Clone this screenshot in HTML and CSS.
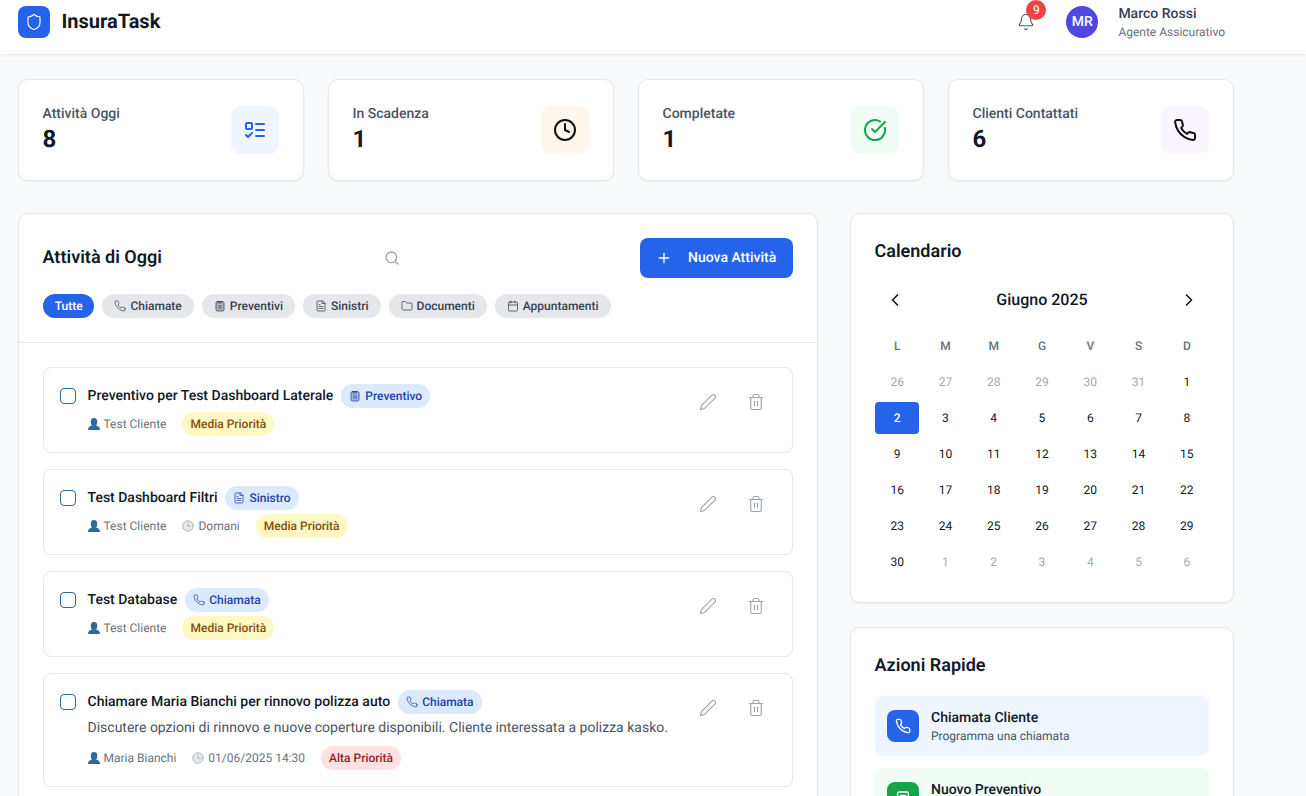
FILE: index.html
```html
<!DOCTYPE html>
<html lang="it">
<head>
<meta charset="utf-8">
<title>InsuraTask</title>
<link rel="stylesheet" href="styles.css">
</head>
<body>
<svg class="sprite" xmlns="http://www.w3.org/2000/svg">
  <symbol id="i-shield" viewBox="0 0 24 24"><path d="M20 13c0 5-3.500 7.500-7.660 8.950a1 1 0 0 1-.67-.01C7.500 20.500 4 18 4 13V6a1 1 0 0 1 1-1c2 0 4.500-1.200 6.240-2.720a1.170 1.170 0 0 1 1.520 0C14.510 3.810 17 5 19 5a1 1 0 0 1 1 1z"/></symbol>
  <symbol id="i-bell" viewBox="0 0 24 24"><path d="M10.268 21a2 2 0 0 0 3.464 0"/><path d="M3.262 15.326A1 1 0 0 0 4 17h16a1 1 0 0 0 .74-1.673C19.410 13.956 18 12.499 18 8A6 6 0 0 0 6 8c0 4.499-1.411 5.956-2.738 7.326"/></symbol>
  <symbol id="i-list" viewBox="0 0 24 24"><rect x="3" y="5" width="6" height="6" rx="1"/><path d="m3 17 2 2 4-4"/><path d="M13 6h8"/><path d="M13 12h8"/><path d="M13 18h8"/></symbol>
  <symbol id="i-clock" viewBox="0 0 24 24"><circle cx="12" cy="12" r="10"/><path d="M12 6v6l4 2"/></symbol>
  <symbol id="i-check" viewBox="0 0 24 24"><path d="M21.801 10A10 10 0 1 1 17 3.335"/><path d="m9 11 3 3L22 4"/></symbol>
  <symbol id="i-phone" viewBox="0 0 24 24"><path d="M22 16.920v3a2 2 0 0 1-2.180 2 19.790 19.790 0 0 1-8.630-3.070 19.500 19.500 0 0 1-6-6 19.790 19.790 0 0 1-3.070-8.670A2 2 0 0 1 4.110 2h3a2 2 0 0 1 2 1.720 12.840 12.840 0 0 0 .7 2.810 2 2 0 0 1-.45 2.110L8.090 9.910a16 16 0 0 0 6 6l1.270-1.270a2 2 0 0 1 2.110-.45 12.840 12.840 0 0 0 2.810.7A2 2 0 0 1 22 16.920z"/></symbol>
  <symbol id="i-search" viewBox="0 0 24 24"><circle cx="11" cy="11" r="8"/><path d="m21 21-4.300-4.300"/></symbol>
  <symbol id="i-plus" viewBox="0 0 24 24"><path d="M5 12h14"/><path d="M12 5v14"/></symbol>
  <symbol id="i-clipboard" viewBox="0 0 24 24"><rect x="4" y="3" width="16" height="19" rx="3" fill="currentColor" fill-opacity=".3"/><path d="M9 3h6v3H9z"/><path d="M9 12h6M9 16h6"/></symbol>
  <symbol id="i-note" viewBox="0 0 24 24"><rect x="4" y="3" width="16" height="19" rx="2"/><path d="M8 8h8M8 13h8"/></symbol>
  <symbol id="i-file" viewBox="0 0 24 24"><path d="M15 2H6a2 2 0 0 0-2 2v16a2 2 0 0 0 2 2h12a2 2 0 0 0 2-2V7z"/><path d="M14 2v5h6"/><path d="M8 13h8"/><path d="M8 17h8"/><path d="M8 9h2"/></symbol>
  <symbol id="i-folder" viewBox="0 0 24 24"><path d="M20 20a2 2 0 0 0 2-2V8a2 2 0 0 0-2-2h-7.900a2 2 0 0 1-1.690-.9L9.600 3.900A2 2 0 0 0 7.930 3H4a2 2 0 0 0-2 2v13a2 2 0 0 0 2 2z"/></symbol>
  <symbol id="i-calendar" viewBox="0 0 24 24"><path d="M8 2v4"/><path d="M16 2v4"/><rect x="3" y="4" width="18" height="18" rx="2"/><path d="M3 10h18"/></symbol>
  <symbol id="i-pencil" viewBox="0 0 24 24"><path d="M21.174 6.812a1 1 0 0 0-3.986-3.987L3.842 16.174a2 2 0 0 0-.5.830l-1.321 4.352a.5.500 0 0 0 .623.622l4.353-1.320a2 2 0 0 0 .830-.497z"/></symbol>
  <symbol id="i-trash" viewBox="0 0 24 24"><path d="M3 6h18"/><path d="M19 6v14a2 2 0 0 1-2 2H7a2 2 0 0 1-2-2V6"/><path d="M8 6V4a2 2 0 0 1 2-2h4a2 2 0 0 1 2 2v2"/><path d="M10 11v6"/><path d="M14 11v6"/></symbol>
  <symbol id="i-left" viewBox="0 0 24 24"><path d="m15 18-6-6 6-6"/></symbol>
  <symbol id="i-right" viewBox="0 0 24 24"><path d="m9 18 6-6-6-6"/></symbol>
  <symbol id="i-person" viewBox="0 0 24 24"><ellipse cx="12" cy="8" rx="6.500" ry="8"/><path d="M0 24c0-6 4-8 8.500-9.500h7C20 16 24 18 24 24z"/></symbol>
  <symbol id="i-emoji-clock" viewBox="0 0 24 24"><circle cx="12" cy="12" r="10.500" fill="currentColor" fill-opacity=".25"/><path d="M12 6v6.500h5"/></symbol>
</svg>

<header class="topbar">
  <div class="brand">
    <span class="brand-mark"><svg class="ico ico-18"><use href="#i-shield"/></svg></span>
    <span class="brand-name">InsuraTask</span>
  </div>
  <div class="account">
    <button class="bell" type="button">
      <svg class="ico ico-18"><use href="#i-bell"/></svg>
      <span class="bell-count">9</span>
    </button>
    <span class="avatar">MR</span>
    <div class="who">
      <div class="who-name">Marco Rossi</div>
      <div class="who-role">Agente Assicurativo</div>
    </div>
  </div>
</header>

<main class="page">
  <section class="stats">
    <article class="stat">
      <div><div class="stat-label">Attività Oggi</div><div class="stat-value">8</div></div>
      <span class="stat-icon tint-blue"><svg class="ico ico-24"><use href="#i-list"/></svg></span>
    </article>
    <article class="stat">
      <div><div class="stat-label">In Scadenza</div><div class="stat-value">1</div></div>
      <span class="stat-icon tint-orange"><svg class="ico ico-24"><use href="#i-clock"/></svg></span>
    </article>
    <article class="stat">
      <div><div class="stat-label">Completate</div><div class="stat-value">1</div></div>
      <span class="stat-icon tint-green"><svg class="ico ico-24"><use href="#i-check"/></svg></span>
    </article>
    <article class="stat">
      <div><div class="stat-label">Clienti Contattati</div><div class="stat-value">6</div></div>
      <span class="stat-icon tint-purple"><svg class="ico ico-24"><use href="#i-phone"/></svg></span>
    </article>
  </section>

  <div class="columns">
    <section class="card tasks">
      <div class="tasks-head">
        <div class="tasks-top">
          <div class="tasks-title-wrap">
            <h2 class="card-title">Attività di Oggi</h2>
            <span class="search"><svg class="ico ico-16"><use href="#i-search"/></svg></span>
          </div>
          <button class="primary" type="button"><svg class="ico ico-16"><use href="#i-plus"/></svg>Nuova Attività</button>
        </div>
        <div class="filters">
          <span class="chip chip-on">Tutte</span>
          <span class="chip"><svg class="ico ico-12"><use href="#i-phone"/></svg>Chiamate</span>
          <span class="chip"><svg class="ico ico-12"><use href="#i-clipboard"/></svg>Preventivi</span>
          <span class="chip"><svg class="ico ico-12"><use href="#i-file"/></svg>Sinistri</span>
          <span class="chip"><svg class="ico ico-12"><use href="#i-folder"/></svg>Documenti</span>
          <span class="chip"><svg class="ico ico-12"><use href="#i-calendar"/></svg>Appuntamenti</span>
        </div>
      </div>
      <div class="task-list">
        <article class="task">
          <span class="box"></span>
          <div class="task-body">
            <div class="task-line"><span class="task-title">Preventivo per Test Dashboard Laterale</span><span class="tag"><svg class="ico ico-12"><use href="#i-clipboard"/></svg>Preventivo</span></div>
            <div class="task-meta"><span class="meta"><svg class="ico ico-12 person"><use href="#i-person"/></svg>Test Cliente</span><span class="prio prio-mid">Media Priorità</span></div>
          </div>
          <div class="task-actions"><button class="act" type="button"><svg class="ico ico-18"><use href="#i-pencil"/></svg></button><button class="act" type="button"><svg class="ico ico-18"><use href="#i-trash"/></svg></button></div>
        </article>
        <article class="task">
          <span class="box"></span>
          <div class="task-body">
            <div class="task-line"><span class="task-title">Test Dashboard Filtri</span><span class="tag"><svg class="ico ico-12"><use href="#i-file"/></svg>Sinistro</span></div>
            <div class="task-meta"><span class="meta"><svg class="ico ico-12 person"><use href="#i-person"/></svg>Test Cliente</span><span class="meta"><svg class="ico ico-12"><use href="#i-emoji-clock"/></svg>Domani</span><span class="prio prio-mid">Media Priorità</span></div>
          </div>
          <div class="task-actions"><button class="act" type="button"><svg class="ico ico-18"><use href="#i-pencil"/></svg></button><button class="act" type="button"><svg class="ico ico-18"><use href="#i-trash"/></svg></button></div>
        </article>
        <article class="task">
          <span class="box"></span>
          <div class="task-body">
            <div class="task-line"><span class="task-title">Test Database</span><span class="tag"><svg class="ico ico-12"><use href="#i-phone"/></svg>Chiamata</span></div>
            <div class="task-meta"><span class="meta"><svg class="ico ico-12 person"><use href="#i-person"/></svg>Test Cliente</span><span class="prio prio-mid">Media Priorità</span></div>
          </div>
          <div class="task-actions"><button class="act" type="button"><svg class="ico ico-18"><use href="#i-pencil"/></svg></button><button class="act" type="button"><svg class="ico ico-18"><use href="#i-trash"/></svg></button></div>
        </article>
        <article class="task">
          <span class="box"></span>
          <div class="task-body">
            <div class="task-line"><span class="task-title">Chiamare Maria Bianchi per rinnovo polizza auto</span><span class="tag"><svg class="ico ico-12"><use href="#i-phone"/></svg>Chiamata</span></div>
            <p class="task-desc">Discutere opzioni di rinnovo e nuove coperture disponibili. Cliente interessata a polizza kasko.</p>
            <div class="task-meta"><span class="meta"><svg class="ico ico-12 person"><use href="#i-person"/></svg>Maria Bianchi</span><span class="meta"><svg class="ico ico-12"><use href="#i-emoji-clock"/></svg>01/06/2025 14:30</span><span class="prio prio-high">Alta Priorità</span></div>
          </div>
          <div class="task-actions"><button class="act" type="button"><svg class="ico ico-18"><use href="#i-pencil"/></svg></button><button class="act" type="button"><svg class="ico ico-18"><use href="#i-trash"/></svg></button></div>
        </article>
      </div>
    </section>

    <aside class="side">
      <section class="card side-card">
        <h2 class="card-title">Calendario</h2>
        <div class="cal-head">
          <button class="cal-nav" type="button"><svg class="ico ico-20"><use href="#i-left"/></svg></button>
          <span class="cal-month">Giugno 2025</span>
          <button class="cal-nav" type="button"><svg class="ico ico-20"><use href="#i-right"/></svg></button>
        </div>
        <div class="cal-grid">
          <span class="dow">L</span><span class="dow">M</span><span class="dow">M</span><span class="dow">G</span><span class="dow">V</span><span class="dow">S</span><span class="dow">D</span>
          <span class="day off">26</span><span class="day off">27</span><span class="day off">28</span><span class="day off">29</span><span class="day off">30</span><span class="day off">31</span><span class="day">1</span>
          <span class="day today">2</span><span class="day">3</span><span class="day">4</span><span class="day">5</span><span class="day">6</span><span class="day">7</span><span class="day">8</span>
          <span class="day">9</span><span class="day">10</span><span class="day">11</span><span class="day">12</span><span class="day">13</span><span class="day">14</span><span class="day">15</span>
          <span class="day">16</span><span class="day">17</span><span class="day">18</span><span class="day">19</span><span class="day">20</span><span class="day">21</span><span class="day">22</span>
          <span class="day">23</span><span class="day">24</span><span class="day">25</span><span class="day">26</span><span class="day">27</span><span class="day">28</span><span class="day">29</span>
          <span class="day">30</span><span class="day off">1</span><span class="day off">2</span><span class="day off">3</span><span class="day off">4</span><span class="day off">5</span><span class="day off">6</span>
        </div>
      </section>
      <section class="card side-card">
        <h2 class="card-title">Azioni Rapide</h2>
        <div class="quick-list">
          <div class="quick quick-blue">
            <span class="quick-icon"><svg class="ico ico-16"><use href="#i-phone"/></svg></span>
            <div><div class="quick-title">Chiamata Cliente</div><div class="quick-sub">Programma una chiamata</div></div>
          </div>
          <div class="quick quick-green">
            <span class="quick-icon"><svg class="ico ico-16"><use href="#i-note"/></svg></span>
            <div><div class="quick-title">Nuovo Preventivo</div><div class="quick-sub">Crea un nuovo preventivo</div></div>
          </div>
        </div>
      </section>
    </aside>
  </div>
</main>
</body>
</html>
```

FILE: styles.css
```css
* { box-sizing: border-box; }
html, body { height: 796px; overflow: hidden; }
body {
  margin: 0;
  background: #f8fafc;
  color: #111827;
  font-family: Roboto, "Liberation Sans", sans-serif;
  font-size: 14px;
  line-height: 20px;
  text-rendering: geometricPrecision;
}
button { font: inherit; border: 0; background: none; padding: 0; color: inherit; text-rendering: inherit; }
h2, p { margin: 0; }
.sprite { display: none; }

.ico {
  display: block;
  flex: none;
  fill: none;
  stroke: currentColor;
  stroke-width: 2;
  stroke-linecap: round;
  stroke-linejoin: round;
}
.ico-12 { width: 12px; height: 12px; }
.ico-16 { width: 16px; height: 16px; }
.ico-18 { width: 18px; height: 18px; }
.ico-20 { width: 20px; height: 20px; }
.ico-24 { width: 24px; height: 24px; }

.topbar {
  display: flex;
  justify-content: space-between;
  align-items: center;
  height: 55px;
  padding: 6px 81px 16px 18px;
  background: #fff;
  border-bottom: 1px solid #e9edf2;
  box-shadow: 0 1px 2px rgba(0, 0, 0, .04);
}
.brand { display: flex; align-items: center; gap: 11.5px; }
.brand-mark {
  display: flex;
  align-items: center;
  justify-content: center;
  width: 32px;
  height: 32px;
  border-radius: 8px;
  background: #2563eb;
  color: #fff;
}
.brand-mark .ico { stroke-width: 1.6; }
.brand-name { font-size: 20px; line-height: 28px; font-weight: 700; margin-bottom: 2px; }
.account { display: flex; align-items: center; }
.bell { position: relative; display: flex; padding: 7px 8px; margin-right: 23px; color: #4b5563; }
.bell .ico { stroke-width: 1.5; }
.bell-count {
  position: absolute;
  top: -6px;
  right: -3px;
  width: 20px;
  height: 20px;
  border-radius: 50%;
  background: #ef4444;
  color: #fff;
  font-size: 12px;
  line-height: 20px;
  text-align: center;
}
.avatar {
  width: 32px;
  height: 32px;
  border-radius: 50%;
  background: #4f46e5;
  color: #fff;
  font-weight: 500;
  line-height: 32px;
  text-align: center;
  margin-right: 20px;
}
.who-name { font-weight: 500; color: #374151; }
.who-role { font-size: 12px; line-height: 16px; color: #6b7280; }

.page { padding: 24px 72px 0 18px; }
.stats { display: grid; grid-template-columns: repeat(4, 1fr); gap: 24px; margin-bottom: 32px; }
.stat {
  display: flex;
  justify-content: space-between;
  align-items: center;
  height: 102px;
  padding: 24px 24px 24px 23.5px;
  background: #fff;
  border: 1px solid #e5e7eb;
  border-radius: 10px;
  box-shadow: 0 1px 2px rgba(0, 0, 0, .05);
}
.stat-label { font-weight: 500; color: #4b5563; }
.stat-value { font-size: 24px; line-height: 32px; font-weight: 700; color: #111827; margin: -1px 0 1px; }
.stat-icon {
  display: flex;
  align-items: center;
  justify-content: center;
  width: 48px;
  height: 48px;
  border-radius: 10px;
}
.tint-blue { background: #eff6ff; color: #2563eb; }
.tint-orange { background: #fff7ed; color: #111; }
.tint-green { background: #f0fdf4; color: #16a34a; }
.tint-purple { background: #faf5ff; color: #111; }

.columns { display: grid; grid-template-columns: 800px 384px; gap: 32px; }
.card {
  background: #fff;
  border: 1px solid #e5e7eb;
  border-radius: 10px;
  box-shadow: 0 1px 2px rgba(0, 0, 0, .05);
}
.card-title { font-size: 18px; line-height: 28px; font-weight: 600; color: #111827; margin-left: -0.5px; }

.tasks-head { padding: 24px 24px 24px; border-bottom: 1px solid #e5e7eb; }
.tasks-top { display: flex; justify-content: space-between; align-items: center; margin-bottom: 16px; }
.tasks-title-wrap { display: flex; align-items: center; }
.search { margin-left: 222px; color: #9ca3af; }
.primary {
  display: flex;
  align-items: center;
  gap: 16px;
  width: 153px;
  height: 40px;
  padding: 0 0 0 16px;
  border-radius: 8px;
  background: #2563eb;
  color: #fff;
  font-weight: 500;
}
.filters { display: flex; gap: 8px; }
.chip {
  display: flex;
  align-items: center;
  gap: 4px;
  height: 24px;
  padding: 0 12px;
  border-radius: 12px;
  background: #e5e7eb;
  color: #374151;
  font-size: 12px;
  font-weight: 500;
}
.chip-on { background: #2563eb; color: #fff; padding: 0 11.75px; }
.chip .ico { stroke-width: 1.5; }

.task-list { display: flex; flex-direction: column; gap: 16px; padding: 24px; }
.task {
  display: flex;
  gap: 11.5px;
  padding: 16px;
  background: #fff;
  border: 1px solid #e5e7eb;
  border-radius: 8px;
}
.box {
  flex: none;
  width: 16px;
  height: 16px;
  margin-top: 4px;
  border: 1.5px solid #2b6a9b;
  border-radius: 4px;
  background: #fff;
}
.task-body { flex: 1; min-width: 0; }
.task-line { display: flex; align-items: center; gap: 8px; height: 24px; }
.task-title { font-weight: 500; color: #111827; }
.tag {
  display: flex;
  align-items: center;
  gap: 4px;
  height: 24px;
  padding: 0 8px;
  border-radius: 12px;
  background: #dbeafe;
  color: #1e40af;
  font-size: 12px;
  font-weight: 500;
}
.tag .ico { stroke-width: 1.5; }
.task-desc { margin-top: 4px; color: #4b5563; }
.task-meta { display: flex; align-items: center; gap: 16px; margin-top: 4px; height: 24px; }
.task-desc + .task-meta { margin-top: 8px; }
.meta { display: flex; align-items: center; gap: 4px; font-size: 12px; color: #6b7280; }
.meta .ico { stroke-width: 1.5; color: #9ca3af; }
.meta .person { fill: #2b6a9b; stroke: none; }
.prio {
  height: 24px;
  padding: 0 8px;
  border-radius: 12px;
  font-size: 12px;
  font-weight: 500;
  line-height: 24px;
}
.prio-mid { background: #fef9c3; color: #854d0e; }
.prio-high { background: #fee2e2; color: #991b1b; }
.task-actions { display: flex; gap: 8px; flex: none; }
.act {
  display: flex;
  align-items: center;
  justify-content: center;
  width: 40px;
  height: 36px;
  color: #9ca3af;
}
.act .ico { stroke-width: 1.5; }

.side { display: flex; flex-direction: column; gap: 24px; }
.side-card { padding: 24px; }
.cal-head {
  display: flex;
  justify-content: space-between;
  align-items: center;
  height: 20px;
  margin: 24px 0 20px;
}
.cal-nav { display: flex; justify-content: center; width: 40px; color: #111827; }
.cal-month { font-size: 16px; font-weight: 500; color: #111827; }
.cal-grid { display: grid; grid-template-columns: repeat(7, 1fr); grid-auto-rows: 32px; gap: 4px; }
.dow, .day {
  display: flex;
  align-items: center;
  justify-content: center;
  font-size: 12px;
}
.dow { font-weight: 500; color: #6b7280; }
.day { color: #111827; }
.off { color: #a3a8b0; }
.today { background: #2563eb; color: #fff; font-weight: 500; border-radius: 4px; }

.quick-list { display: flex; flex-direction: column; gap: 12px; margin-top: 16px; }
.quick { display: flex; align-items: center; gap: 12px; height: 60px; padding: 12px; border-radius: 8px; }
.quick-blue { background: #eff6ff; }
.quick-green { background: #f0fdf4; }
.quick-icon {
  display: flex;
  align-items: center;
  justify-content: center;
  width: 32px;
  height: 32px;
  border-radius: 8px;
  color: #fff;
}
.quick-blue .quick-icon { background: #2563eb; }
.quick-green .quick-icon { background: #16a34a; }
.quick-title { font-weight: 500; color: #111827; }
.quick-sub { font-size: 12px; line-height: 16px; color: #4b5563; }
```
